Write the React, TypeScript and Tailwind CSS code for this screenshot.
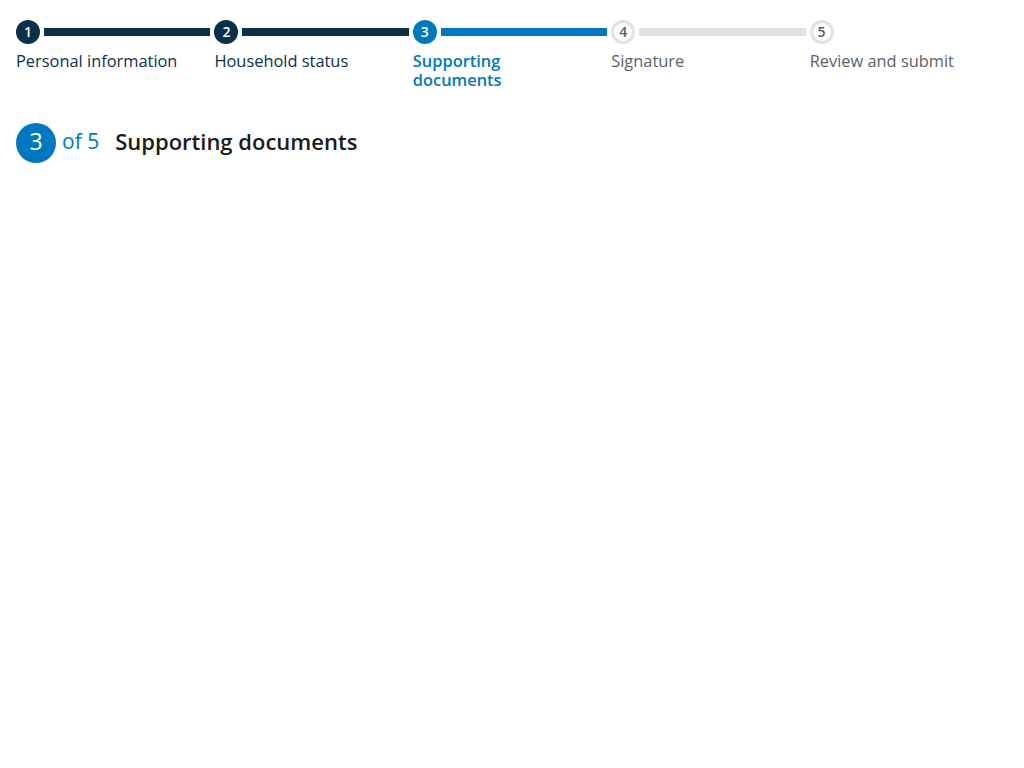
import React from "react";

type Status = "complete" | "current" | "upcoming";

const steps: { label: string; status: Status }[] = [
  { label: "Personal information", status: "complete" },
  { label: "Household status", status: "complete" },
  { label: "Supporting documents", status: "current" },
  { label: "Signature", status: "upcoming" },
  { label: "Review and submit", status: "upcoming" },
];

function Step({ index, label, status, last }: { index: number; label: string; status: Status; last: boolean }) {
  const circle =
    status === "complete"
      ? "bg-[#0b3049] text-white"
      : status === "current"
      ? "bg-[#0078c0] text-white"
      : "bg-white text-[#565c65] border-[3px] border-[#dfe1e2]";
  const line =
    status === "complete" ? "bg-[#0b3049]" : status === "current" ? "bg-[#0078c0]" : "bg-[#dfe1e2]";
  const text =
    status === "complete"
      ? "text-[#0b3049]"
      : status === "current"
      ? "text-[#0078c0] font-semibold"
      : "text-[#5c6068]";

  return (
    <li className="flex-1 min-w-0">
      <div className="flex items-center h-6">
        <span
          className={`w-6 h-6 shrink-0 rounded-full flex items-center justify-center text-[14px] font-semibold leading-none ${circle}`}
        >
          {index}
        </span>
        {!last && <span className={`flex-1 h-2 ml-1 mr-1 ${line}`} />}
      </div>
      <div className={`mt-[7px] pr-8 text-[16.4px] leading-[19px] ${text}`}>{label}</div>
    </li>
  );
}

export default function App() {
  return (
    <div className="min-h-screen bg-white px-4 pt-5" style={{ fontFamily: '"Open Sans", sans-serif' }}>
      <ol className="flex">
        {steps.map((s, i) => (
          <Step key={s.label} index={i + 1} label={s.label} status={s.status} last={i === steps.length - 1} />
        ))}
      </ol>
      <div className="mt-[34px] flex items-center">
        <span className="w-10 h-10 pb-[3px] rounded-full bg-[#0078c0] text-white flex items-center justify-center text-[23px] leading-none">
          3
        </span>
        <span className="ml-[6px] mb-[2px] text-[#0078c0] text-[21px]">of 5</span>
        <h2 className="ml-[16px] mb-1 text-[22px] font-semibold text-[#1b1b1b]">Supporting documents</h2>
      </div>
    </div>
  );
}
